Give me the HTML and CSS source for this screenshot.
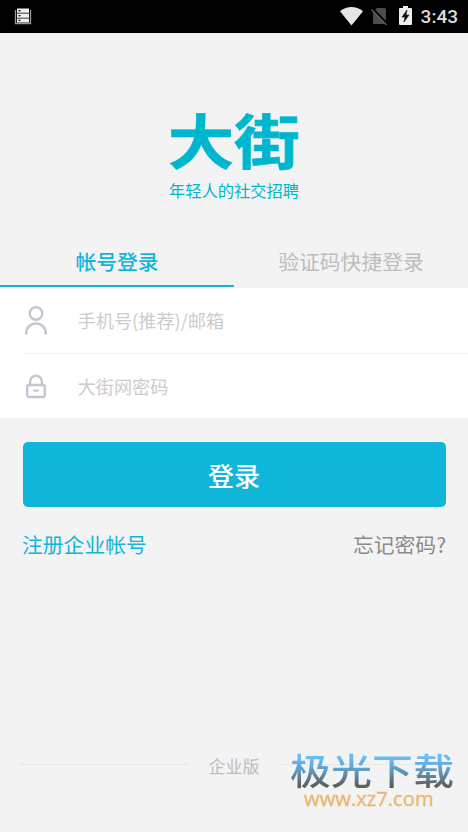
FILE: index.html
```html
<!DOCTYPE html>
<html lang="zh-CN">
<head>
<meta charset="utf-8">
<meta name="viewport" content="width=device-width, initial-scale=1">
<title>登录</title>
<link rel="stylesheet" href="styles.css">
</head>
<body>
<div class="screen">
  <header class="status">
    <svg class="status-app" width="18" height="17" viewBox="0 0 18 17">
      <path d="M1.500 2v13.500h15V2" fill="none" stroke="#999" stroke-width="1.300"/>
      <path d="M3 .5h12v4.200H3zM3 5.500h12v4.200H3zM3 10.500h12v4H3z" fill="#eee"/>
      <path d="M4.500 2h2v1.300h-2zM4.500 7h2v1.300h-2zM4.500 11.800h2v1.300h-2z" fill="#111"/>
    </svg>
    <div class="status-right">
      <svg class="wifi" width="23" height="19" viewBox="0 0 23 19"><path d="M0 4.2Q11.5-4 23 4.2L11.5 18.5z" fill="#e6e6e6"/></svg>
      <svg class="sim" width="17" height="18" viewBox="0 0 17 18"><path d="M6 0h7.500Q15 0 15 1.500V16H3Q2 16 2 15V4z" fill="#4c4c4c"/><path d="M1 .5L16 16" stroke="#000" stroke-width="3"/><path d="M.5 1.500L15.500 17" stroke="#666" stroke-width="1.200"/></svg>
      <svg class="battery" width="13" height="19" viewBox="0 0 13 19"><path d="M4 0h5v2h3q1 0 1 1v15q0 1-1 1H1q-1 0-1-1V3q0-1 1-1h3z" fill="#eee"/><path d="M8 4L3 11h3l-1 5 5-7H7z" fill="#111" stroke="#111" stroke-width=".6"/></svg>
      <span class="clock">3:43</span>
    </div>
  </header>
  <section class="brand">
    <h1 class="brand-name">大街</h1>
    <p class="brand-slogan">年轻人的社交招聘</p>
  </section>
  <nav class="tabs">
    <a class="tab tab-active">帐号登录</a>
    <a class="tab">验证码快捷登录</a>
  </nav>
  <main>
    <div class="fields">
      <label class="field">
        <svg class="field-icon" width="26" height="30" viewBox="0 0 26 30" fill="none" stroke="#c4c6d1" stroke-width="2.500" stroke-linecap="round"><circle cx="13" cy="7.500" r="6.300"/><path d="M3.200 27.500C3.200 14.200 22.800 14.200 22.800 27.500"/></svg>
        <span class="placeholder">手机号(推荐)/邮箱</span>
      </label>
      <label class="field">
        <svg class="field-icon" width="26" height="26" viewBox="0 0 26 26" fill="none" stroke="#c4c6d1" stroke-width="2.400" stroke-linecap="round"><rect x="4.200" y="12" width="17.600" height="12" rx="2"/><path d="M7.200 11.500V8.500a5.800 5.800 0 0 1 11.600 0v3M11.200 17.600h3.600"/></svg>
        <span class="placeholder">大街网密码</span>
      </label>
    </div>
    <button class="submit">登录</button>
    <div class="links"><a class="register">注册企业帐号</a><a class="forgot">忘记密码?</a></div>
  </main>
  <footer class="footer"><span class="edition">企业版</span></footer>
  <div class="watermark"><span class="mark-name">极光下载</span><span class="mark-url">www.xz7.com</span></div>
</div>
</body>
</html>
```
FILE: styles.css
```css
* { box-sizing: border-box; }
body { margin: 0; font-family: "Noto Sans CJK SC", sans-serif; background: #f3f3f3; }
.screen { position: relative; width: 468px; height: 832px; overflow: hidden; display: flex; flex-direction: column; background: #f3f3f3; }
svg { display: block; flex: none; }
.status { height: 33px; flex: none; display: flex; justify-content: space-between; padding: 0 10px 0 14px; background: #000; }
.status-app { margin-top: 8px; }
.status-right { display: flex; align-items: flex-start; }
.wifi { margin-top: 7px; }
.sim { margin: 8px 0 0 8px; }
.battery { margin: 6px 0 0 11px; }
.clock { margin-left: 9px; font: 500 19px/34px Roboto, sans-serif; color: #dedede; }
.brand { height: 206px; flex: none; text-align: center; color: #00b6ce; padding-top: 70px; }
.brand-name { margin: 0; font-size: 66px; line-height: 70px; font-weight: 700; -webkit-text-stroke: .8px #00b6ce; transform: scaleY(.89); }
.brand-slogan { margin: 5px 0 0; font-size: 16.3px; line-height: 24px; }
.tabs { height: 49px; flex: none; display: flex; padding-bottom: 1px; }
.tab { flex: 1; text-align: center; font-size: 20.8px; line-height: 44px; color: #bdbdbd; border-bottom: 2px solid transparent; }
.tab-active { color: #10b6da; border-color: #10b6da; font-weight: 500; }
.fields { height: 130px; padding-left: 23px; background: #fff; }
.field { display: flex; align-items: center; height: 65px; }
.field + .field { border-top: 1px solid #f1f1f1; }
.placeholder { margin-left: 28.5px; padding-bottom: 1px; font-size: 18.2px; line-height: 28px; color: #ccc; }
.submit { display: block; width: 423px; height: 65px; margin: 24px 0 0 22.5px; padding: 0; border: 0; border-radius: 5px; background: #0fb6da; color: #fff; font: 500 26px/65px "Noto Sans CJK SC", sans-serif; }
.links { display: flex; justify-content: space-between; padding: 22px 22px 0; font-size: 20.8px; line-height: 30px; }
.register { color: #10b6da; }
.forgot { color: #8c8c8c; }
.footer { margin-top: auto; height: 80px; display: flex; align-items: flex-start; padding: 0 20px; }
.footer::before, .footer::after { content: ""; height: 1px; flex: 1; margin-top: 12px; background: #e6e7ea; }
.edition { width: 92px; text-align: center; font-size: 17px; line-height: 27px; color: #bdbdbd; }
.watermark { position: absolute; left: 290px; top: 748px; width: 166px; display: flex; flex-direction: column; }
.mark-name { font-size: 41px; line-height: 43px; font-weight: 500; background: linear-gradient(#67bdf5 20%, #6198bd 55%, #606060 90%); -webkit-background-clip: text; background-clip: text; color: transparent; transform: scaleY(.9); }
.mark-url { margin: -3px 0 0 14px; font: 20.2px/20px "Open Sans", sans-serif; color: #edb46f; -webkit-text-stroke: .3px #edb46f; }
```
